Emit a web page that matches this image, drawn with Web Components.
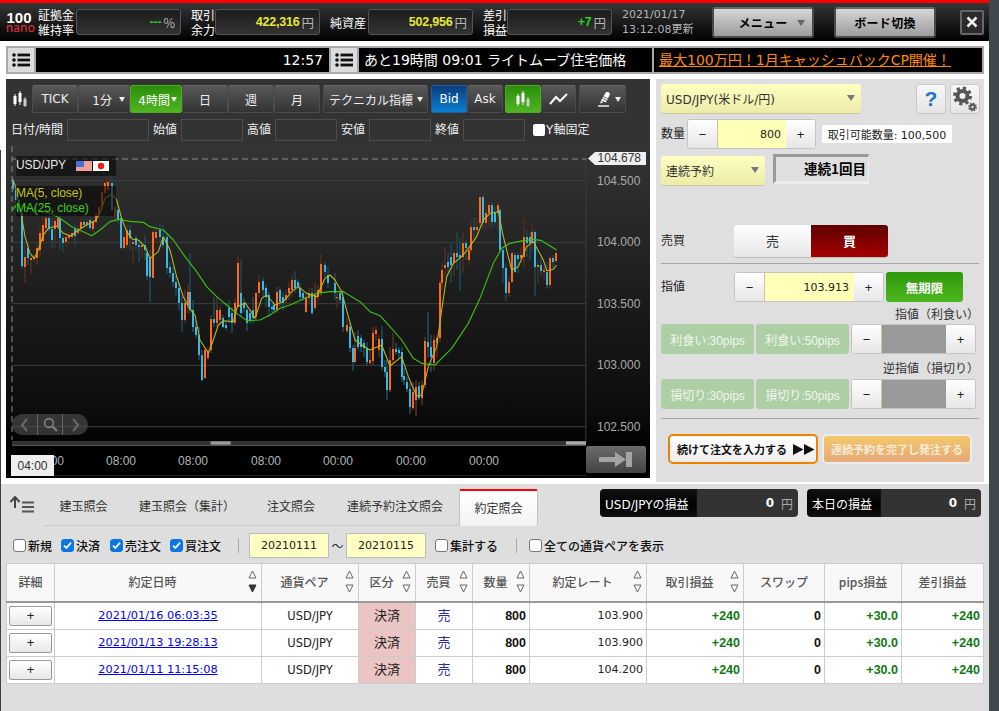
<!DOCTYPE html>
<html lang="ja"><head><meta charset="utf-8"><title>FX</title>
<style>
html,body{margin:0;padding:0;height:711px;overflow:hidden;background:linear-gradient(90deg,#2f383c,#3f484d);}
body{font:12px "DejaVu Sans","Noto Sans CJK JP",sans-serif;color:#333;}
fx-app{display:block;width:989px;height:711px;}
</style></head><body>
<fx-app></fx-app>
<script>
const JA='"DejaVu Sans","Noto Sans CJK JP",sans-serif', AR='"Liberation Sans","Noto Sans CJK JP",sans-serif';
function def(name,css,html,after){customElements.define(name,class extends HTMLElement{
  connectedCallback(){ if(this.shadowRoot)return; const r=this.attachShadow({mode:'open'});
    r.innerHTML='<style>'+css+'</style>'+(typeof html==='function'?html(this):html); if(after)after(r,this);} });}
const LIST='<svg width="18" height="14" viewBox="0 0 18 14"><g fill="#111"><circle cx="2" cy="2" r="1.8"/><circle cx="2" cy="7" r="1.8"/><circle cx="2" cy="12" r="1.8"/><rect x="5.5" y="0.6" width="12.5" height="2.8"/><rect x="5.5" y="5.6" width="12.5" height="2.8"/><rect x="5.5" y="10.6" width="12.5" height="2.8"/></g></svg>';
const CANDLE=(c='#fff')=>`<svg width="14" height="16" viewBox="0 0 14 16"><g fill="${c}"><rect x="0.5" y="5" width="3" height="8"/><rect x="1.5" y="3" width="1" height="12"/><rect x="5.5" y="2" width="3" height="9"/><rect x="6.5" y="0" width="1" height="14"/><rect x="10.500" y="8" width="3" height="7" fill="#ccc"/><rect x="11.5" y="6" width="1" height="10" fill="#ccc"/></g></svg>`;

/* ---------- header ---------- */
def('fx-stat',`:host{display:flex;align-items:center;margin-left:10px;height:26px}
.l{flex:none;white-space:nowrap;color:#fff;font:12px/15px "Noto Sans CJK JP",sans-serif;text-align:center;margin-right:var(--gap,0)}
.b{flex:none;height:24px;border:1px solid #555;border-radius:3px;background:linear-gradient(#1c1c1c,#333);display:flex;align-items:center;justify-content:flex-end;font:bold 12.5px ${AR};}
.v{color:var(--c,#e8e832);letter-spacing:-.2px}.u{color:#b5b5b5;font:12.5px "Noto Sans CJK JP",sans-serif;margin:0 5px 0 2px}`,
 e=>`<div class="l" style="width:${e.getAttribute('lw')}px;--gap:${e.getAttribute('g')||0}px">${e.getAttribute('label')}</div><div class="b" style="width:103px"><span class="v" style="--c:${e.getAttribute('c')||'#e8e832'}">${e.getAttribute('val')}</span><span class="u">${e.getAttribute('unit')}</span></div>`);
def('fx-topbtn',`:host{display:flex;align-items:center;justify-content:center;position:relative;box-sizing:border-box;height:31px;border:2px solid #4a4a4a;border-top-color:#666;border-radius:3px;background:linear-gradient(#d6d6d6,#9c9c9c);color:#000;font:bold 12px "Noto Sans CJK JP",sans-serif;letter-spacing:.3px}
i{position:absolute;right:7px;top:11px;border:4px solid transparent;border-top:6px solid #666;border-bottom:0}`,
 e=>`<slot></slot>${e.hasAttribute('arrow')?'<i></i>':''}`);
def('fx-topbar',`:host{display:flex;align-items:center;height:38px;border-top:3px solid #f00;background:linear-gradient(#363636,#000);padding-left:6px}
.logo{width:26px;flex:none;margin-right:-4px;color:#fff;text-align:center;line-height:1}
.logo b{display:block;font:bold 15px/12px "Liberation Sans",sans-serif}
.logo span{display:block;font:400 12.5px/8px "Lato",sans-serif;color:#e3323c;letter-spacing:.5px;margin-top:0}
.date{margin-left:10px;width:80px;flex:none;color:#b4b4b4;font:11px/15px ${JA};white-space:nowrap}
.x{flex:none;margin-left:24px;width:24px;height:25px;box-sizing:border-box;border:2px solid #666;border-radius:2px;background:#2a2a2a;display:flex;align-items:center;justify-content:center}`,
`<div class="logo"><b>100</b><span>nano</span></div>
<fx-stat label="証拠金<br>維持率" lw="36" g="2" val="---" unit="%" c="#27d11b"></fx-stat>
<fx-stat label="取引<br>余力" lw="24" val="422,316" unit="円"></fx-stat>
<fx-stat label="純資産" lw="36" g="2" val="502,956" unit="円"></fx-stat>
<fx-stat label="差引<br>損益" lw="24" val="+7" unit="円" c="#27d11b"></fx-stat>
<div class="date">2021/01/17<br>13:12:08更新</div>
<fx-topbtn arrow style="margin-left:10px;width:102px;flex:none">メニュー</fx-topbtn>
<fx-topbtn style="margin-left:20px;width:102px;flex:none">ボード切換</fx-topbtn>
<div class="x"><svg width="12" height="12" viewBox="0 0 12 12"><path d="M1.5 1.5l9 9M10.5 1.5l-9 9" stroke="#eee" stroke-width="2.6"/></svg></div>`);

/* ---------- ticker ---------- */
def('fx-ticker',`:host{display:flex;margin:5px 5px 0 6px;height:24px;border:2px solid #a9a9a9;background:#a9a9a9;color:#fff;font:14px/24px ${JA}}
.i{width:26px;background:#dcdcdc;display:flex;align-items:center;justify-content:center}
.t{background:#000;white-space:nowrap;overflow:hidden}
a{color:#ff8a00;text-decoration:underline}`,
`<div class="i">${LIST}</div><div class="t" style="margin-left:2px;width:293px;text-align:right;box-sizing:border-box;padding-right:6px;margin-right:2px">12:57</div>
<div class="i">${LIST}</div><div class="t" style="margin-left:2px;width:293px;padding-left:5px;box-sizing:border-box">あと19時間 09:01 ライトムーブ住宅価格</div>
<div class="t" style="margin-left:2px;flex:1;padding-left:5px"><a>最大100万円！1月キャッシュバックCP開催！</a></div>`);

/* ---------- chart ---------- */
const L=[[38,90,118,'b'],[47,120,150,'b'],[56,150,185,'b'],[66,190,348,'b'],[75,322,350,'o',280,398],[84,295,325,'b',280,345],[93,325,330,'o',318,372],[102,320,326,'o'],[111,295,325,'o',280,345],[120,250,300,'o',230,320],[129,225,272,'o',200,285],[138,205,235,'o',195,255],[147,205,238,'b',195,250],[156,238,270,'b',205,295],[165,212,238,'o',205,295],[174,205,230,'o'],[181,205,265,'b',195,300],[190,265,280,'b',255,305],[199,260,276,'o',250,290],[208,255,263,'o',245,285],[217,250,260,'o'],[226,236,258,'b',225,285],[235,236,250,'o',225,255],[244,215,236,'o',200,245],[253,215,226,'b'],[262,215,226,'o'],[270,210,235,'b',200,240],[279,212,238,'o'],[288,195,215,'o',180,225],[297,170,195,'o'],[306,125,170,'o'],[315,100,130,'o',85,140],[324,95,120,'o',70,130],[335,100,180,'b',70,190],[345,170,198,'o',130,215],[354,180,210,'b'],[364,205,293,'b',200,298],[373,262,295,'o',240,300],[382,240,285,'o',225,295],[391,240,265,'b',225,300],[399,275,282,'o',260,340],[408,265,285,'b',255,300],[417,285,292,'b',270,335],[426,285,290,'o',275,325],[435,285,300,'b',255,330],[441,310,378,'b',290,390],[450,320,380,'b',300,455],[459,245,383,'o',240,385],[469,245,265,'o',230,280],[481,240,260,'b',222,275],[490,260,285,'b',225,295],[500,260,355,'b',250,372],[509,350,370,'b',335,385],[518,368,395,'b',350,410],[527,395,415,'b',375,435],[536,415,460,'b',400,480],[545,460,510,'b',430,547],[554,460,510,'o',420,520],[563,425,465,'o',405,490],[571,425,480,'b',310,490],[580,480,530,'b',450,545],[589,530,555,'b',510,565],[597,555,615,'b',530,630],[606,615,690,'b',600,692],[615,600,685,'o',595,686],[624,603,625,'o',590,630],[633,508,600,'o',495,610],[642,508,520,'b',440,530],[651,480,520,'o',440,530],[660,480,510,'o',470,525],[669,505,530,'b',495,535],[678,525,535,'b',510,540],[687,475,500,'b',450,520],[696,490,520,'b',470,550],[705,460,520,'o',445,525],[714,340,470,'o',318,475],[724,430,490,'b',330,500],[733,460,475,'b',445,490],[742,480,520,'b',470,542],[751,490,510,'b',478,520],[760,480,505,'b',440,520],[769,430,500,'o',425,510],[778,395,430,'o',375,440],[788,393,420,'b',380,445],[798,415,440,'b',405,470],[806,435,470,'b',425,500],[815,470,478,'b'],[823,465,480,'b'],[831,425,480,'o',410,490],[840,420,455,'b',410,470],[850,440,460,'b',425,480],[858,435,450,'o',420,465],[867,415,430,'o',395,450],[875,390,420,'o',375,440],[885,390,415,'b',362,430],[893,395,410,'b'],[901,415,440,'b',400,450],[910,430,445,'b'],[917,440,485,'o',430,490],[926,430,445,'o',410,465],[935,430,490,'b',415,495],[945,435,475,'o',400,480],[953,420,440,'o',405,455],[962,342,430,'o',313,438],[975,345,365,'b',335,380],[985,375,400,'b',350,415]];
const R=[[14,398,430,'b',370,450],[22,440,445,'o',430,475],[31,430,450,'b'],[40,440,530,'b',420,545],[50,525,542,'o',505,550],[60,530,595,'b',520,605],[69,595,637,'b',585,662],[76,595,635,'o',545,640],[85,558,590,'b',540,600],[94,565,590,'b',555,605],[103,578,595,'b',570,620],[112,595,635,'b',575,645],[120,630,640,'o',600,648],[129,550,632,'o',530,645],[138,540,552,'o',530,570],[147,568,600,'o',555,620],[156,568,650,'b',528,660],[165,650,665,'b',630,680],[172,665,720,'b',630,750],[181,630,720,'o',590,725],[189,598,630,'o',550,640],[198,598,605,'b',580,615],[206,600,608,'b',590,625],[215,605,680,'b',590,695],[223,678,690,'b',655,705],[232,695,716,'b',680,725],[241,716,772,'b',700,792],[249,725,775,'o',695,780],[258,710,750,'o',690,798],[267,708,745,'b',695,750],[275,705,745,'o',690,765],[285,572,705,'o',560,715],[294,575,590,'b',485,625],[303,590,622,'b',555,665],[312,570,640,'o',555,660],[320,565,578,'o',555,620],[329,400,565,'o',390,575],[337,360,400,'o',340,420],[345,345,355,'o',290,380],[354,335,350,'b',310,375],[362,320,345,'b',275,395],[371,310,340,'o',300,380],[380,310,322,'b',245,360],[389,315,325,'b',265,422],[398,280,320,'o',250,370],[407,280,295,'b',270,330],[416,300,330,'o',290,345],[424,232,300,'o',205,310],[433,232,240,'b',200,270],[441,232,240,'o',205,262],[450,140,218,'o',130,230],[459,140,218,'b',135,238],[468,190,220,'o',160,238],[477,165,190,'o',155,235],[485,165,215,'b',155,235],[494,190,215,'b',170,225],[503,165,190,'o',155,240],[511,180,300,'b',170,310],[520,300,355,'b',290,400],[529,355,428,'b',340,452],[537,395,430,'o',380,440],[546,310,395,'o',305,400],[555,315,365,'b',305,370],[564,315,326,'b',305,368],[573,315,325,'o',290,340],[581,260,320,'o',205,350],[590,260,280,'b',240,320],[599,260,280,'b',243,330],[606,245,280,'o',220,300],[615,245,350,'b',240,437],[624,345,350,'o',330,400],[632,345,362,'b',325,380],[641,360,366,'o',350,390],[650,365,405,'b',335,418],[660,325,405,'o',318,415],[668,325,335,'b',315,355],[678,310,332,'o',305,340]];
const ALL=L.concat(R.map(c=>[c[0]+990,...c.slice(1)]));
const bars=ALL.map(c=>{const [x,t,b,k,wt,wb]=c,o=k==='o';
 return `<rect x="${x-3}" y="${wt??t-8}" width="6" height="${(wb??b+8)-(wt??t-8)}" fill="${o?'#47291d':'#1c3f4e'}"/><rect x="${x-3}" y="${t}" width="6" height="${b-t}" fill="${o?'#ff6a14':'#38b8e2'}"/>`}).join('');
const pts=(a)=>a.map(p=>p[0]+','+p[1]).join(' ');
const M5=[[38,88],[47,110],[56,160],[65,200],[75,260],[90,310],[103,325],[115,300],[130,255],[145,235],[170,228],[190,250],[212,258],[235,240],[260,225],[285,212],[300,190],[315,145],[335,133],[350,150],[365,205],[380,245],[398,268],[415,270],[435,290],[450,325],[475,305],[490,260],[510,300],[530,380],[550,440],[565,470],[585,495],[600,570],[625,610],[640,570],[655,525],[670,512],[700,515],[712,470],[735,458],[750,480],[765,505],[785,445],[800,435],[825,465],[850,455],[875,425],[895,410],[920,430],[950,440],[975,385],[990,375]].concat([[15,390],[35,425],[55,500],[75,570],[95,585],[120,600],[155,585],[180,648],[215,620],[235,680],[260,738],[275,735],[295,650],[320,590],[335,480],[350,380],[370,340],[395,320],[415,295],[440,260],[460,210],[480,190],[505,185],[520,260],[545,360],[565,350],[590,290],[610,275],[640,330],[650,362],[670,358],[680,345]].map(p=>[p[0]+990,p[1]]));
const M25=[[36,180],[50,165],[80,172],[150,190],[180,205],[215,230],[250,245],[275,257],[300,240],[330,215],[355,208],[390,214],[430,217],[450,230],[490,240],[520,270],[555,320],[590,365],[620,410],[650,440],[680,465],[710,490],[740,512],[780,510],[810,495],[840,475],[870,465],[910,447],[950,430],[990,425]].concat([[40,425],[90,455],[120,485],[150,497],[180,530],[215,570],[250,625],[275,640],[315,645],[365,595],[415,520],[450,445],[490,340],[515,295],[540,280],[580,272],[610,268],[635,272],[680,300]].map(p=>[p[0]+990,p[1]]));
const grid=[92,277,461,646,830].map(y=>`<rect x="36" y="${y-1.5}" width="1724" height="3" fill="#3f3f3f"/>`).join('');

def('fx-tbtn',`:host{display:flex;align-items:center;justify-content:center;position:relative;box-sizing:border-box;height:28px;width:var(--w);flex:none;border:1px solid #4c4c4c;border-top-color:#666;background:linear-gradient(#585858,#333);color:#eee;font:12px ${JA};border-radius:2px}
:host([on]){background:linear-gradient(#2b8f0c,#4fb520);border-color:#4caf20;color:#fff}
:host([blue]){background:linear-gradient(#0a3d7e,#0a80d2);border-color:#1d5fa5;color:#fff;font-weight:500}
i{position:absolute;right:4px;top:11px;border:3.5px solid transparent;border-top:5px solid #eee;border-bottom:0}`,
 e=>`<slot></slot>${e.hasAttribute('arrow')?'<i></i>':''}`);
def('fx-olabel',`:host{display:inline-block;color:#eee;font:12px/22px ${JA};white-space:nowrap}`,'<slot></slot>');
def('fx-ohlc',`:host{display:inline-block;box-sizing:border-box;height:22px;border:1px solid #4d4d4d;background:#333}`,'');
def('fx-chart',`:host{display:flex;flex-direction:column;width:644px;height:399px;flex:none;background:#333;position:relative;overflow:hidden}
.bar{display:flex;align-items:center;height:28px;margin-top:6px;padding-left:7px}
.f{display:flex;align-items:center;height:22px;margin-top:6px;padding-left:5px}
.f fx-olabel{margin-right:4px}.f fx-ohlc{margin-right:4px}
.plot{position:relative;height:332px;margin-top:5px;background:linear-gradient(#343434 0,#1c1c1c 45%,#0c0c0c 80%,#000 91%);}
svg.s{position:absolute;left:0;top:0;display:block}
.lab{position:absolute;font:12px ${AR};color:#aaa;white-space:nowrap}
.tag{position:absolute;left:582px;top:6px;width:58px;height:13px;background:#eee;clip-path:polygon(0 50%,7px 0,100% 0,100% 100%,7px 100%);color:#333;font:12px/13px ${AR};text-align:right}
.tag span{margin-right:5px}
.leg{position:absolute;left:10px;width:100px;background:rgba(8,8,8,.62);}
.l1{top:10px;height:20px;color:#e6e6e6;font:12px/19px ${AR};letter-spacing:-.1px;}
.l1 span{position:absolute;left:0}
.flag{position:absolute;top:5px;width:16px;height:10px}
.l2{top:40px;height:30px;font:12px/15px ${AR};letter-spacing:-.1px}
.now{position:absolute;left:5px;top:309px;width:43px;height:21px;background:#eee;color:#333;font:12px/23px ${AR};text-align:center}
.nav{position:absolute;left:6px;top:268px;width:76px;height:21px;border-radius:11px;background:rgba(80,80,80,.62);display:flex}
.nav div{flex:1;display:flex;align-items:center;justify-content:center;border-left:1px solid #666}.nav div:first-child{border:0}
.jump{position:absolute;left:580px;top:300px;width:60px;height:27px;border-radius:2px;background:linear-gradient(#6a6a6a,#444);display:flex;align-items:center;justify-content:center}
.cb{width:12px;height:12px;background:#fff;border-radius:2px;margin-right:1px}`,
e=>`<div class="bar">${CANDLE()}
<fx-tbtn style="--w:46px;margin-left:5px">TICK</fx-tbtn><fx-tbtn arrow style="--w:52px">1分&nbsp;</fx-tbtn><fx-tbtn on arrow style="--w:52px">4時間&nbsp;</fx-tbtn><fx-tbtn style="--w:46px">日</fx-tbtn><fx-tbtn style="--w:46px">週</fx-tbtn><fx-tbtn style="--w:46px">月</fx-tbtn>
<fx-tbtn arrow style="--w:105px;margin-left:3px;justify-content:flex-start;padding-left:5px">テクニカル指標</fx-tbtn><fx-tbtn blue style="--w:36px;margin-left:3px">Bid</fx-tbtn><fx-tbtn style="--w:36px">Ask</fx-tbtn>
<fx-tbtn on style="--w:36px;margin-left:2px">${CANDLE()}</fx-tbtn><fx-tbtn style="--w:35px"><svg width="20" height="12" viewBox="0 0 20 12"><path d="M1 11l6-7 4 4 7-7" fill="none" stroke="#fff" stroke-width="2"/></svg></fx-tbtn>
<fx-tbtn arrow style="--w:47px;margin-left:3px;justify-content:flex-start;padding-left:17px"><svg width="14" height="15" viewBox="0 0 14 15"><path d="M4 8.500L8.500 1a2 2 0 0 1 4 2.300L9 10.500z" fill="#fff"/><path d="M5.300 6.300l4.400 2.300M6.300 4.500l4.400 2.300" stroke="#444" stroke-width=".8"/><path d="M4 8.500l-.8 3 2.800-1z" fill="#fff"/><path d="M1 14h11" stroke="#fff" stroke-width="1.4"/></svg></fx-tbtn></div>
<div class="f"><fx-olabel>日付/時間</fx-olabel><fx-ohlc style="width:82px"></fx-ohlc><fx-olabel>始値</fx-olabel><fx-ohlc style="width:62px"></fx-ohlc><fx-olabel>高値</fx-olabel><fx-ohlc style="width:62px"></fx-ohlc><fx-olabel>安値</fx-olabel><fx-ohlc style="width:62px"></fx-ohlc><fx-olabel>終値</fx-olabel><fx-ohlc style="width:62px;margin-right:8px"></fx-ohlc><div class="cb"></div><fx-olabel>Y軸固定</fx-olabel></div>
<div class="plot"><svg class="s" width="644" height="332" viewBox="18 -12 1932 996">
<rect x="1756" y="-12" width="3" height="890" fill="#3c3c3c"/>
${grid}<g shape-rendering="crispEdges">${bars}</g>
<path d="M36 27H1760" stroke="#8a8a8a" stroke-width="3" stroke-dasharray="18 12"/>
<path d="M36 -12V870" stroke="#8a8a8a" stroke-width="3" stroke-dasharray="18 12"/>
<rect x="36" y="873" width="1722" height="12" fill="#333"/><rect x="36" y="885" width="1722" height="3" fill="#555"/>
<rect x="632" y="874" width="60" height="10" fill="#9a9a9a"/><rect x="1698" y="874" width="60" height="10" fill="#aaa"/>
<rect x="36" y="975" width="1722" height="3" fill="#222"/>
<polyline points="${pts(M25)}" fill="none" stroke="#3cc014" stroke-width="3.4" stroke-linejoin="round"/>
<polyline points="${pts(M5)}" fill="none" stroke="#b9b820" stroke-width="3.2" stroke-linejoin="round"/>
</svg>
<div class="leg l1"><span>USD/JPY</span>
<svg class="flag" style="left:60px" viewBox="0 0 16 10"><rect width="16" height="10" fill="#f4b9a8"/><path d="M0 1h16M0 3h16M0 5h16M0 7h16M0 9h16" stroke="#e88" stroke-width="1"/><rect width="8" height="6" fill="#4a6fd8"/></svg>
<svg class="flag" style="left:77px" viewBox="0 0 16 10"><rect width="16" height="10" fill="#fff"/><circle cx="8" cy="5" r="3.2" fill="#f01818"/></svg></div>
<div class="leg l2"><div style="color:#c0c418">MA(5, close)</div><div style="color:#3ccf10">MA(25, close)</div></div>
<div class="tag"><span>104.678</span></div>
${[['104.500',34.7],['104.000',96],['103.500',157.5],['103.000',219],['102.500',280.5]].map(a=>`<div class="lab" style="left:591px;top:${a[1]-7}px">${a[0]}</div>`).join('')}
${[['00:00',28],['08:00',100],['08:00',172],['08:00',245],['00:00',317],['00:00',390],['00:00',463]].map(a=>`<div class="lab" style="left:${a[1]}px;top:308px;color:#b4b4b4">${a[0]}</div>`).join('')}
<div class="now">04:00</div>
<div class="nav"><div><svg width="9" height="14" viewBox="0 0 9 14"><path d="M7 1L2 7l5 6" fill="none" stroke="#6a6a6a" stroke-width="2"/></svg></div><div><svg width="15" height="15" viewBox="0 0 15 15"><circle cx="6" cy="6" r="4.4" fill="none" stroke="#808080" stroke-width="1.6"/><path d="M9.5 9.5L14 14" stroke="#808080" stroke-width="2"/></svg></div><div><svg width="9" height="14" viewBox="0 0 9 14"><path d="M2 1l5 6-5 6" fill="none" stroke="#6a6a6a" stroke-width="2"/></svg></div></div>
<div class="jump"><svg width="34" height="15" viewBox="0 0 34 15"><path d="M0 5h16V0l11 7.5L16 15v-5H0zM27 0h6v15h-6z" fill="#a4a4a4"/></svg></div>
</div>`);

/* ---------- order panel ---------- */
def('fx-sel',`:host{display:flex;align-items:center;box-sizing:border-box;height:30px;border-radius:3px;border-bottom:1px solid #c8c89a;background:linear-gradient(#ffffc0,#ecebaa);padding:0 6px 0 5px;position:relative;color:#333;font:12px ${JA};white-space:nowrap}
i{position:absolute;right:6px;top:11px;border:4px solid transparent;border-top:6px solid #777;border-bottom:0}`,'<slot></slot><i></i>');
def('fx-step',`:host{display:grid;grid-template-columns:29px 1fr 29px;box-sizing:border-box;height:30px;border:1px solid #c4c4c4;border-radius:3px;overflow:hidden;background:#fff}
div{display:flex;align-items:center;justify-content:center;background:linear-gradient(#fff,#e6e6e6);color:#222;font:13px "Liberation Sans",sans-serif}
.m{background:var(--fill,#ffffb8);justify-content:flex-end;padding-right:5px;font:11px ${JA};color:#222;border:0 solid #c8c8a0;border-width:0 0 0 1px}`,
 e=>`<div>−</div><div class="m" style="${e.getAttribute('fill')?'--fill:'+e.getAttribute('fill'):''}">${e.getAttribute('val')||''}</div><div>+</div>`);
def('fx-quick',`:host{display:flex;align-items:center;justify-content:center;width:93px;height:30px;border-radius:3px;background:#aecfa6;color:#f0f6ee;font:12px ${AR};white-space:nowrap}`,'<slot></slot>');
def('fx-order',`:host{display:block;box-sizing:border-box;width:328px;height:403px;flex:none;background:#dfdfdf;padding:5px 0 0 5px;color:#222;font:12px ${JA}}
.r{display:flex;align-items:center}
.sq{box-sizing:border-box;width:30px;height:30px;border:1px solid #c9c9c9;border-radius:3px;background:linear-gradient(#f8f8f8,#e4e4e4);display:flex;align-items:center;justify-content:center}
.lab{color:#222;font:12px "Noto Sans CJK JP",sans-serif;padding-bottom:3px}
hr{border:0;height:1px;background:#a8a8a8;margin:0;width:318px}
.cap{text-align:right;color:#333;width:318px;font:12px/17px "Noto Sans CJK JP",sans-serif}
.tg{width:77px;height:32px;display:flex;align-items:center;justify-content:center;font:bold 13px "Noto Sans CJK JP",sans-serif;padding-bottom:2px;box-sizing:border-box}
.inf{margin-left:6px;width:130px;height:18px;background:#fff;display:flex;align-items:center;justify-content:center;white-space:nowrap;font:11px ${JA}}
.cnt{box-sizing:border-box;width:96px;height:30px;margin-left:8px;border:solid;border-width:3px 1px 3px 3px;border-color:#999 #eee #eee #999;display:flex;align-items:center;justify-content:flex-end;padding:0 2px 2px 0;color:#000;font:bold 13.5px "Noto Sans CJK JP",sans-serif}
.go{box-sizing:border-box;width:150px;height:30px;border-radius:5px;display:flex;align-items:center;justify-content:center;font:bold 11px "Noto Sans CJK JP",sans-serif;white-space:nowrap}`,
`<div class="r"><fx-sel style="width:200px">USD/JPY(米ドル/円)</fx-sel>
<div class="sq" style="margin-left:55px"><span style="color:#1b74c9;font:900 21px 'Liberation Sans',sans-serif">?</span></div>
<div class="sq" style="margin-left:4px"><svg width="26" height="26" viewBox="0 0 26 26"><g fill="none" stroke="#555"><circle cx="10.5" cy="10" r="5" stroke-width="4"/><circle cx="10.5" cy="10" r="8" stroke-width="3" stroke-dasharray="3.2 3.1"/><circle cx="20.5" cy="21" r="2.2" stroke-width="2"/><circle cx="20.5" cy="21" r="3.6" stroke-width="1.6" stroke-dasharray="1.6 1.2"/></g></svg></div></div>
<div class="r" style="margin-top:5px"><span class="lab" style="width:26px">数量</span><fx-step style="width:129px" val="800"></fx-step><div class="inf">取引可能数量: 100,500</div></div>
<div class="r" style="margin-top:5px;align-items:flex-start;height:32px"><fx-sel style="width:104px;margin-top:2px">連続予約</fx-sel><div class="cnt">連続1回目</div></div>
<div class="r" style="margin-top:39px"><span class="lab" style="width:73px">売買</span><div style="display:flex;border-radius:3px;overflow:hidden;box-shadow:0 1px 0 #bbb"><div class="tg" style="background:linear-gradient(#fff,#e6e6e6);color:#333;font-weight:400">売</div><div class="tg" style="background:linear-gradient(#5e0000,#a60000);color:#fff">買</div></div></div>
<hr style="margin-top:6px">
<div class="r" style="margin-top:8px"><span class="lab" style="width:73px">指値</span><fx-step style="width:150px" val="103.913"></fx-step><div style="margin-left:2px;width:77px;height:30px;border-radius:3px;background:linear-gradient(#2f980b,#4db71f);color:#fff;display:flex;align-items:center;justify-content:center;font:bold 12.5px 'Noto Sans CJK JP',sans-serif">無期限</div></div>
<div class="cap" style="margin-top:3px">指値（利食い）</div>
<div class="r" style="margin-top:2px;gap:2px"><fx-quick>利食い:30pips</fx-quick><fx-quick>利食い:50pips</fx-quick><fx-step style="width:125px" fill="#999"></fx-step></div>
<div class="cap" style="margin-top:5px">逆指値（損切り）</div>
<div class="r" style="margin-top:3px;gap:2px"><fx-quick>損切り:30pips</fx-quick><fx-quick>損切り:50pips</fx-quick><fx-step style="width:125px" fill="#999"></fx-step></div>
<hr style="margin-top:9px">
<div class="r" style="margin:15px 0 0 7px;gap:4px"><div class="go" style="border:2px solid #f08000;background:linear-gradient(#fff,#eee);color:#111;padding-left:6px">続けて注文を入力する<svg style="margin-left:6px" width="22" height="11" viewBox="0 0 22 11"><path d="M0 0l10.500 5.500L0 11zM11 0l10.500 5.500L11 11z" fill="#111"/></svg></div><div class="go" style="border:2px solid #ececec;background:linear-gradient(#f3c86a,#e6a87a);color:#f8ecd8">連続予約を完了し発注する</div></div>`);

/* ---------- report ---------- */
def('fx-check',`:host{display:inline-flex;align-items:center;color:#111;font:500 12px "Noto Sans CJK JP",sans-serif;white-space:nowrap}
b{box-sizing:border-box;width:13px;height:13px;margin-right:2px;border:1px solid #777;border-radius:3px;background:#fff;display:flex;align-items:center;justify-content:center}
:host([checked]) b{background:#0b76e8;border-color:#0b76e8}`,
 `<b><svg width="9" height="9" viewBox="0 0 9 9"><path d="M1 4.6l2.4 2.4L8 1.6" fill="none" stroke="#fff" stroke-width="1.8"/></svg></b><slot></slot>`,
 (r,e)=>{if(!e.hasAttribute('checked'))r.querySelector('svg').remove();});
def('fx-tab',`:host{display:flex;align-items:center;justify-content:center;box-sizing:border-box;height:37px;flex:none;color:#333;font:12px "Noto Sans CJK JP",sans-serif;border-bottom:1px solid #c8c8c8;white-space:nowrap;padding-bottom:3px}
:host([on]){background:linear-gradient(#fff,#f3f3f3);border:1px solid #c2c2c2;border-top:2px solid #f00;border-bottom:0;border-radius:2px 2px 3px 3px;width:79px}`,'<slot></slot>');
def('fx-loss',`:host{display:flex;height:28px;flex:none;border-radius:4px;overflow:hidden;color:#fff;font:12px ${JA}}
.a{display:flex;align-items:center;padding-left:5px;background:linear-gradient(#111,#000 60%,#111);white-space:nowrap}
.b{flex:1;display:flex;align-items:center;justify-content:flex-end;background:#333;border-left:1px solid #111;font:bold 12px ${JA};}
.b span{color:#aaa;font-weight:400;margin:0 5px 0 7px}`,
 e=>`<div class="a" style="width:${e.getAttribute('lw')}px;box-sizing:border-box">${e.getAttribute('label')}</div><div class="b">0<span>円</span></div>`);
const ar=(act)=>`<span class="ar"><svg width="9" height="9" viewBox="0 0 9 9"><path d="M4.5 1L8 8H1z" fill="none" stroke="#666" stroke-width="1"/></svg><svg width="9" height="9" viewBox="0 0 9 9"><path d="M4.5 8L8 1H1z" ${act?'fill="#333" stroke="#333"':'fill="none" stroke="#666"'} stroke-width="1"/></svg></span>`;
const rows=[['2021/01/16 06:03:35','103.900'],['2021/01/13 19:28:13','103.900'],['2021/01/11 11:15:08','104.200']];
def('fx-report',`:host{display:block;height:227px;background:#dedede;padding-top:5px;box-sizing:border-box}
.top{display:flex;align-items:flex-start;height:37px}
.flt{display:flex;align-items:center;height:26px;margin-top:6px;padding-left:12px}
.inp{box-sizing:border-box;width:80px;height:25px;background:#ffffc4;border:1px solid #bcbcbc;display:flex;align-items:center;justify-content:center;font:11px ${JA};color:#222}
.sep{width:1px;height:15px;background:#aaa}
table{border-collapse:collapse;table-layout:fixed;width:977px;margin:5px 0 0 5px;background:#fff}
th{height:35px;padding:0 0 2px;background:#f8f8f8;border:1px solid #ccc;border-bottom:2px solid #999;color:#555;font:500 12px "Noto Sans CJK JP",sans-serif}
td{height:27px;padding:0 3px;border:1px solid #ccc;font:11px ${JA};color:#222;text-align:center;box-sizing:border-box;vertical-align:middle}
.h{display:flex;align-items:center}.h>span:first-child{flex:1;text-align:center;white-space:nowrap;padding-left:6px}
.ar{width:17px;display:flex;flex-direction:column;gap:5px;align-items:center;}
.ar svg{display:block}
td.n{text-align:right}td.g{color:#0f7a0f;font:bold 12.5px ${AR}}td.k{color:#111;font:bold 12.5px ${AR}}
td.j{font:13px "Noto Sans CJK JP",sans-serif;padding-bottom:3px}
a{color:#00f;text-decoration:underline;font-size:11.3px}
.d{box-sizing:border-box;width:43px;height:20px;margin:0 0 0 0;border:1px solid #999;border-radius:2px;background:linear-gradient(#fff,#e8e8e8);display:flex;align-items:center;justify-content:center;color:#222;font:13px "Liberation Sans",sans-serif}`,
`<div class="top"><div style="flex:none;width:43px;padding:7px 0 0 8px;box-sizing:border-box"><svg width="26" height="20" viewBox="0 0 26 20"><path d="M6 12V2M1.5 6L6 1l4.5 5" fill="none" stroke="#444" stroke-width="2"/><path d="M13 6.500h12M13 11h12M13 15.500h12" stroke="#555" stroke-width="2"/></svg></div>
<fx-tab style="width:79px">建玉照会</fx-tab><fx-tab style="width:128px">建玉照会（集計）</fx-tab><fx-tab style="width:80px">注文照会</fx-tab><fx-tab style="width:128px">連続予約注文照会</fx-tab><fx-tab on>約定照会</fx-tab>
<fx-loss label="USD/JPYの損益" lw="96" style="width:198px;margin-left:62px"></fx-loss><fx-loss label="本日の損益" lw="73" style="width:174px;margin-left:9px"></fx-loss></div>
<div class="flt"><fx-check>新規</fx-check><fx-check checked style="margin-left:9px">決済</fx-check><fx-check checked style="margin-left:10px">売注文</fx-check><fx-check checked style="margin-left:9px">買注文</fx-check>
<div class="sep" style="margin-left:17px"></div><div class="inp" style="margin-left:10px">20210111</div><span style="width:17px;text-align:center;color:#333;font:12px 'Noto Sans CJK JP'">～</span><div class="inp">20210115</div>
<fx-check style="margin-left:9px">集計する</fx-check><div class="sep" style="margin-left:18px"></div><fx-check style="margin-left:12px">全ての通貨ペアを表示</fx-check></div>
<table><colgroup>${[48,207,97,57,57,57,117,97,81,77,82].map(w=>`<col style="width:${w}px">`).join('')}</colgroup>
<tr><th>詳細</th><th><div class="h"><span>約定日時</span>${ar(1)}</div></th><th><div class="h"><span>通貨ペア</span>${ar()}</div></th><th><div class="h"><span>区分</span>${ar()}</div></th><th><div class="h"><span>売買</span>${ar()}</div></th><th><div class="h"><span>数量</span>${ar()}</div></th><th><div class="h"><span>約定レート</span>${ar()}</div></th><th><div class="h"><span>取引損益</span>${ar()}</div></th><th>スワップ</th><th>pips損益</th><th>差引損益</th></tr>
${rows.map(r=>`<tr><td style="padding:0 2px"><div class="d">+</div></td><td><a>${r[0]}</a></td><td style="font-size:11.5px;color:#222">USD/JPY</td><td class="j" style="background:#ebc4c4">決済</td><td class="j" style="color:#2a2aa8">売</td><td class="n k">800</td><td class="n" style="font-size:11px">${r[1]}</td><td class="n g">+240</td><td class="n k">0</td><td class="n g">+30.0</td><td class="n g">+240</td></tr>`).join('')}
</table>`);
def('fx-app',`:host{display:block;background:#fff}
.main{display:flex;gap:6px;padding:5px 5px 0 6px;height:410px;box-sizing:border-box;background:linear-gradient(#3a4248,#3a4248) 0 76px/1px 100% no-repeat}
.lower{border-left:1px solid #3a4248}`,
`<fx-topbar></fx-topbar><fx-ticker></fx-ticker><div class="main"><fx-chart></fx-chart><fx-order></fx-order></div><fx-report class="lower"></fx-report>`);
</script></body></html>
